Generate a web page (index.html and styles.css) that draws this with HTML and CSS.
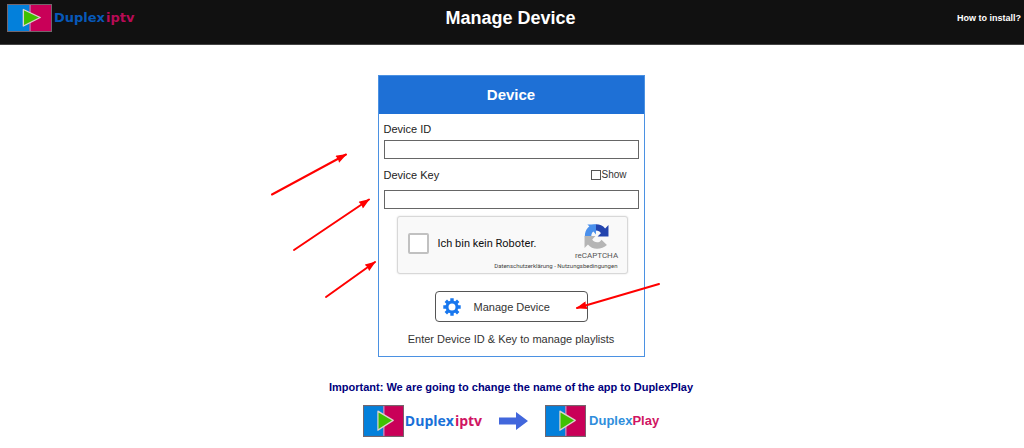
FILE: index.html
```html
<!DOCTYPE html>
<html lang="en">
<head>
<meta charset="utf-8">
<meta name="viewport" content="width=device-width, initial-scale=1">
<title>Manage Device</title>
<link rel="stylesheet" href="styles.css">
</head>
<body>
<svg class="defs" aria-hidden="true">
  <symbol id="mark" viewBox="0 0 44 28" preserveAspectRatio="none">
    <rect width="22" height="28" fill="#0380db"/>
    <rect x="22" width="22" height="28" fill="#c90058"/>
    <path d="M22.500 0V28" stroke="#b9a7d8" stroke-width="1"/>
    <rect x=".5" y=".5" width="43" height="27" fill="none" stroke="#75666d"/>
    <path d="M16 5.500V22L32.500 13.500Z" fill="#3fc000" stroke="#ddd4cf" stroke-width="1.300" stroke-linejoin="round"/>
  </symbol>
</svg>
<header class="topbar">
  <a class="brand brand-top" href="#"><svg class="mark"><use href="#mark"/></svg><span class="name"><span class="blue">Duplex</span><span class="pink">iptv</span></span></a>
  <h1 class="title">Manage Device</h1>
  <a class="help" href="#">How to install?</a>
</header>
<main class="page">
  <form class="card">
    <h2 class="card-title">Device</h2>
    <div class="card-body">
      <label class="label" for="device-id">Device ID</label>
      <input class="field" id="device-id" type="text">
      <div class="key-row">
        <label class="label" for="device-key">Device Key</label>
        <span class="show"><input class="show-box" id="show" type="checkbox"><label for="show">Show</label></span>
      </div>
      <input class="field" id="device-key" type="password">
      <div class="captcha">
        <input class="captcha-box" id="robot" type="checkbox">
        <label class="captcha-label" for="robot">Ich bin kein Roboter.</label>
        <div class="captcha-side">
          <svg class="captcha-icon" viewBox="0 0 24 24" aria-hidden="true">
            <path d="M11.500 .3C8.300 .3 5.700 1.300 3.700 3.700C1.800 5.800 .8 8.500 .8 12H7C7 9.800 7.700 8.200 9 7.300L11.500 10Z" fill="#4a90ec"/>
            <path d="M3.200 .5H11.500V6.500H9.500Z" fill="#4a90ec"/>
            <path d="M11.500 .3C15 .3 18.200 1.800 20.300 4.200L23.500 1V12H13L16.200 8.800C15.400 7.200 13.600 6.300 11.500 6.300Z" fill="#2344ae"/>
            <path d="M.5 11.500H11L7.900 14.900C8.900 16.700 10.600 17.500 12.500 17.500C14.500 17.500 16 16.500 16.800 15L22 20.200C19.800 22.500 16 23.800 12.500 23.800C9 23.800 5.800 22.200 3.800 19.600L.5 23Z" fill="#b5b5b5"/>
          </svg>
          <span class="captcha-name">reCAPTCHA</span>
        </div>
        <div class="captcha-links"><a href="#">Datenschutzerklärung</a> - <a href="#">Nutzungsbedingungen</a></div>
      </div>
      <button class="manage" type="button">
        <svg class="gear" viewBox="-9 -9 18 18" aria-hidden="true">
          <circle r="5" fill="none" stroke="#1877ee" stroke-width="3"/>
          <g stroke="#1877ee" stroke-width="3.400">
            <path d="M0-8.700V-5M0 8.700V5M-8.700 0H-5M8.700 0H5"/>
            <path d="M-6.200-6.200L-4-4M6.200 6.200L4 4M-6.200 6.200L-4 4M6.200-6.200L4-4"/>
          </g>
        </svg>
        <span>Manage Device</span>
      </button>
      <p class="hint">Enter Device ID &amp; Key to manage playlists</p>
    </div>
    <svg class="pointers" viewBox="260 140 410 170" aria-hidden="true">
      <defs>
        <marker id="tip" viewBox="0 0 11 8" refX="10" refY="4" markerWidth="12" markerHeight="8" markerUnits="userSpaceOnUse" orient="auto">
          <path d="M0 0L11 4L0 8L.8 4Z" fill="red"/>
        </marker>
      </defs>
      <g fill="none" stroke="red" stroke-width="2" stroke-linecap="round">
        <path d="M272 194.500L346 154.500" marker-end="url(#tip)"/>
        <path d="M294 250L369 199.500" marker-end="url(#tip)"/>
        <path d="M326 297L375 262" marker-end="url(#tip)"/>
        <path d="M659 284L577 308" marker-end="url(#tip)"/>
      </g>
    </svg>
  </form>
  <p class="notice">Important: We are going to change the name of the app to DuplexPlay</p>
  <div class="rename">
    <div class="brand brand-old"><svg class="mark"><use href="#mark"/></svg><span class="name"><span class="blue">Duplex</span><span class="pink">iptv</span></span></div>
    <svg class="arrow" viewBox="0 0 29 18" aria-hidden="true"><path d="M0 5.500H17V0L29 9L17 18V12.500H0Z" fill="#4267dc"/></svg>
    <div class="brand brand-new"><svg class="mark"><use href="#mark"/></svg><span class="name"><span class="blue">Duplex</span><span class="pink">Play</span></span></div>
  </div>
</main>
</body>
</html>
```
FILE: styles.css
```css
* { box-sizing: border-box; }
body {
  margin: 0;
  background: #fff;
  color: #333;
  font: 11px/16px "Liberation Sans", Arial, sans-serif;
}
h1, h2, p { margin: 0; }
a { color: inherit; text-decoration: none; }
.defs { position: absolute; width: 0; height: 0; }

.topbar {
  display: grid;
  grid-template-columns: 1fr auto 1fr;
  align-items: center;
  min-height: 45px;
  padding: 0 3px 8px 0;
  background: #111;
  border-bottom: 1px solid #444;
  color: #fff;
}
.title { font-size: 18px; line-height: 24px; }
.help { justify-self: end; font-size: 9px; font-weight: bold; }

.brand { display: flex; align-items: center; gap: 1px; }
.name { display: flex; gap: 1px; font-weight: bold; }
.mark { width: 41px; height: 32px; flex: none; }
.brand-top { gap: 2px; padding-left: 7px; }
.brand-top .mark { width: 45px; height: 28px; }
.brand-top .name { font: bold 13px/20px "DejaVu Sans", sans-serif; }
.brand-top .blue { color: #0758b8; }
.brand-top .pink { color: #b80b55; }
.brand-old .name { font: bold 14px/20px "Open Sans", sans-serif; }
.brand-new { gap: 3px; }
.brand-new .name { gap: 0; font-size: 13px; }
.blue { color: #1870d8; }
.brand-new .blue { color: #2f8edc; }
.pink { color: #d01563; }

.page {
  display: flex;
  flex-direction: column;
  align-items: center;
  padding: 30px 2px 10px 0;
}
.card {
  position: relative;
  width: 267px;
  max-width: 100%;
  border: 1px solid #4b91e2;
}
.card-title {
  background: #1e70d6;
  color: #fff;
  font-size: 15px;
  line-height: 38px;
  text-align: center;
}
.card-body {
  display: flex;
  flex-direction: column;
  padding: 7px 5px 9px;
}
.label { color: #222; }
.field {
  width: 100%;
  height: 19px;
  margin: 0;
  padding: 0 4px;
  border: 1px solid #666;
  border-radius: 0;
  background: #fff;
  font: inherit;
}
.card-body > .label { margin-bottom: 3px; }
.key-row {
  display: flex;
  justify-content: space-between;
  padding: 8px 12px 7px 0;
}
.show { display: flex; align-items: center; font-size: 10px; }
.show-box, .captcha-box {
  appearance: none;
  width: 10px;
  height: 10px;
  margin: 0;
  border: 1px solid #555;
  background: #fff;
}
.captcha {
  display: grid;
  grid-template-columns: 21px 1fr 60px;
  column-gap: 9px;
  align-content: start;
  align-self: center;
  width: 231px;
  height: 58px;
  margin: 7px 0 17px 2px;
  padding: 7px 0 0 10px;
  border: 1px solid #d8d8d8;
  border-radius: 3px;
  background: #f9f9f9;
  box-shadow: 0 0 2px #ddd;
  font-family: Roboto, sans-serif;
}
.captcha-box {
  align-self: center;
  width: 21px;
  height: 21px;
  border: 2px solid #c1c1c1;
  border-radius: 2px;
}
.captcha-label { align-self: center; color: #111; }
.captcha-side {
  display: flex;
  flex-direction: column;
  align-items: center;
}
.captcha-icon { width: 25px; height: 25px; }
.captcha-name { color: #555; font-size: 8px; line-height: 14px; }
.captcha-links {
  grid-column: 1 / -1;
  justify-self: end;
  padding-right: 9px;
  color: #444;
  font-size: 6px;
  line-height: 6px;
}
.manage {
  display: flex;
  align-items: center;
  align-self: center;
  gap: 13px;
  width: 153px;
  height: 31px;
  padding: 0 7px;
  border: 1px solid #555;
  border-radius: 4px;
  background: #fff;
  color: #333;
  font: inherit;
}
.gear { width: 18px; height: 18px; }
.hint { margin-top: 9px; text-align: center; }
.pointers {
  position: absolute;
  top: 64px;
  left: -119px;
  width: 410px;
  height: 170px;
  pointer-events: none;
}
.notice {
  margin-top: 22px;
  color: #00007d;
  font-weight: bold;
}
.rename {
  display: flex;
  align-items: center;
  gap: 17px;
  margin-top: 10px;
}
.arrow { width: 29px; height: 18px; }
```
